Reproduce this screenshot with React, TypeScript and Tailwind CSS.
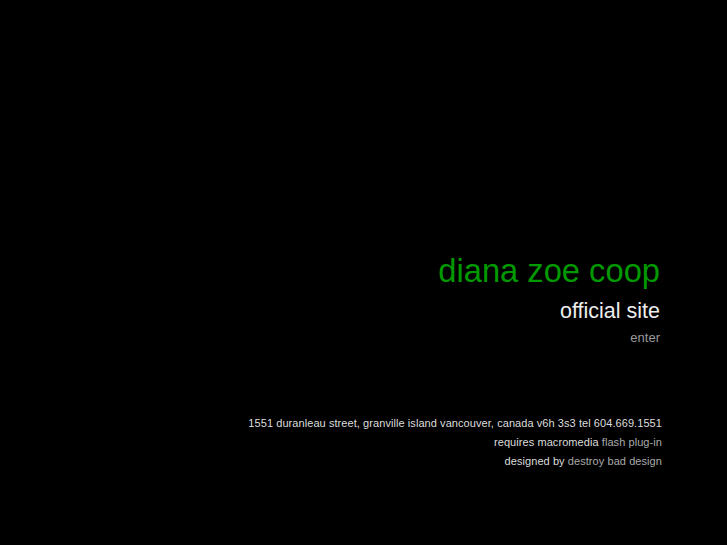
export default function App() {
  return (
    <div
      className="w-full h-[545px] bg-black flex flex-col items-end overflow-hidden"
      style={{ fontFamily: '"Liberation Sans", Arial, sans-serif' }}
    >
      {/* title block */}
      <div className="mt-[252px] mr-[67px] flex flex-col items-end">
        <h1 className="text-[32.7px] leading-[38px] text-[#009900] font-normal">diana zoe coop</h1>
        <h2 className="text-[21.5px] leading-[38px] text-[#eeeeee] font-normal mt-[2px]">official site</h2>
        <a href="#" className="text-[13px] leading-[16px] text-[#999999]">enter</a>
      </div>

      {/* footer */}
      <div className="mt-[68px] mr-[65px] flex flex-col items-end text-[11px] leading-[19px] tracking-[0.07px] text-[#dddddd]">
        <p>1551 duranleau street, granville island vancouver, canada v6h 3s3 tel 604.669.1551</p>
        <p>
          requires macromedia <a href="#" className="text-[#aaaaaa]">flash plug-in</a>
        </p>
        <p>
          designed by <a href="#" className="text-[#aaaaaa]">destroy bad design</a>
        </p>
      </div>
    </div>
  );
}
